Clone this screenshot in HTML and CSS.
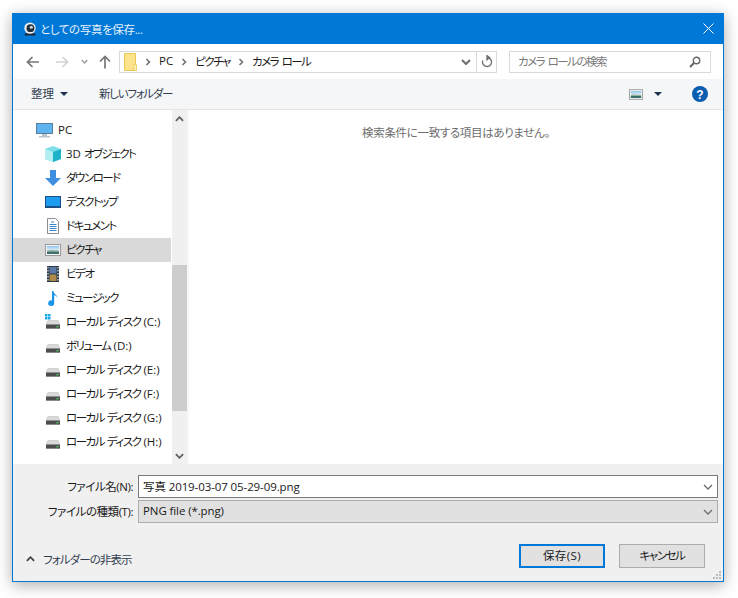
FILE: index.html
```html
<!DOCTYPE html>
<html lang="ja">
<head>
<meta charset="utf-8">
<title>としての写真を保存...</title>
<link rel="stylesheet" href="styles.css">
</head>
<body>
<svg class="defs" width="0" height="0" aria-hidden="true">
  <defs>
    <linearGradient id="sky" x1="0" y1="0" x2="0" y2="1">
      <stop offset="0" stop-color="#8fc4ea"/>
      <stop offset="1" stop-color="#e6f2f8"/>
    </linearGradient>
  </defs>
  <symbol id="drive" viewBox="0 0 16 16">
    <path d="M3 6.500h10l2 4.500H1z" fill="#d9d9d9" stroke="#bdbdbd" stroke-width=".6"/>
    <rect x="1" y="10.500" width="14" height="4.500" rx=".8" fill="#4c4c4c"/>
    <rect x="1" y="14" width="14" height="1" fill="#8a8a8a"/>
    <rect x="11.500" y="12" width="2" height="1.400" fill="#3fdc5a"/>
  </symbol>
  <symbol id="picture" viewBox="0 0 16 12">
    <rect x=".5" y=".5" width="15" height="11" fill="#f4f4f4" stroke="#9b9b9b"/>
    <rect x="2" y="2" width="12" height="4.500" fill="url(#sky)"/>
    <path d="M2 6.500c3-1 6-.5 12 0v1H2z" fill="#8fae9c"/>
    <rect x="2" y="7.500" width="12" height="2.500" fill="#3f6f6c"/>
  </symbol>
  <symbol id="chev" viewBox="0 0 10 6">
    <path d="M1 1l4 4 4-4" fill="none" stroke="currentColor" stroke-width="1.300"/>
  </symbol>
  <symbol id="chev-bold" viewBox="0 0 10 6">
    <path d="M1 1l4 4 4-4" fill="none" stroke="currentColor" stroke-width="2"/>
  </symbol>
  <symbol id="sep" viewBox="0 0 6 8">
    <path d="M1.500 1l3 3-3 3" fill="none" stroke="#6d6d6d" stroke-width="1.500"/>
  </symbol>
  <symbol id="caret" viewBox="0 0 8 4">
    <path d="M0 0h8L4 4z" fill="#1e3250"/>
  </symbol>
</svg>

<main class="window">
  <header class="titlebar">
    <svg class="app-icon" width="14" height="14" viewBox="0 0 16 16">
      <path d="M2 15.500h12v-2l-2-1H4l-2 1z" fill="#1b2a3a"/>
      <circle cx="8" cy="7" r="6.500" fill="#e9eef2"/>
      <circle cx="8.500" cy="7" r="4.500" fill="#22303c"/>
      <circle cx="9.500" cy="6" r="1.800" fill="#c9d6e0"/>
    </svg>
    <span class="title">としての写真を保存...</span>
    <svg class="close" width="11" height="11" viewBox="0 0 11 11">
      <path d="M.5.5l10 10M10.500.5l-10 10" stroke="#fff" stroke-width="1" fill="none"/>
    </svg>
  </header>

  <nav class="navbar">
    <svg class="nav-btn" width="14" height="12" viewBox="0 0 14 12"><path d="M13 6H2M6.500 1L1.500 6l5 5" fill="none" stroke="#757575" stroke-width="1.700"/></svg>
    <svg class="nav-btn nav-fwd" width="14" height="12" viewBox="0 0 14 12"><path d="M1 6h11M7.500 1l5 5-5 5" fill="none" stroke="#d3d3d3" stroke-width="1.700"/></svg>
    <svg class="nav-down" width="7" height="5"><use href="#chev-bold"/></svg>
    <svg class="nav-btn nav-up" width="12" height="14" viewBox="0 0 12 14"><path d="M6 13.500V2M1 6.500l5-5 5 5" fill="none" stroke="#757575" stroke-width="1.700"/></svg>
    <div class="address">
      <svg class="folder" width="13" height="18" viewBox="0 0 13 18">
        <path d="M.5.500h11v17H.5z" fill="#fde48c" stroke="#eac652"/>
        <path d="M10 11.500h2.500v6H10z" fill="#fff3c4" stroke="#eac652" stroke-width=".8"/>
      </svg>
      <svg class="crumb-sep" width="6" height="8"><use href="#sep"/></svg>
      <span class="crumb crumb-latin">PC</span>
      <svg class="crumb-sep" width="6" height="8"><use href="#sep"/></svg>
      <span class="crumb">ピクチャ</span>
      <svg class="crumb-sep" width="6" height="8"><use href="#sep"/></svg>
      <span class="crumb">カメラ ロール</span>
      <svg class="addr-chev" width="10" height="6"><use href="#chev-bold"/></svg>
      <span class="refresh">
        <svg width="12" height="13" viewBox="0 0 12 13"><path d="M6 2.500a4.500 4.500 0 1 1-4.200 3M6 .5v4.200L8.500 2.500z" fill="none" stroke="#6f6f6f" stroke-width="1.300"/></svg>
      </span>
    </div>
    <div class="search">
      <span>カメラ ロールの検索</span>
      <svg width="12" height="12" viewBox="0 0 12 12"><circle cx="7.500" cy="4.500" r="3.200" fill="none" stroke="#666" stroke-width="1.400"/><path d="M5 7L1 11" stroke="#666" stroke-width="2"/></svg>
    </div>
  </nav>

  <div class="toolbar">
    <span class="tool">整理</span>
    <svg class="tool-caret" width="8" height="4"><use href="#caret"/></svg>
    <span class="tool tool-new">新しいフォルダー</span>
    <svg class="view-icon" width="14" height="11"><use href="#picture"/></svg>
    <svg class="view-caret" width="8" height="4"><use href="#caret"/></svg>
    <svg class="help" width="16" height="16" viewBox="0 0 16 16"><circle cx="8" cy="8" r="8" fill="#0a5eb0"/><text x="8" y="12.500" class="help-q">?</text></svg>
  </div>

  <section class="content">
    <aside class="tree">
      <ul class="tree-list">
        <li class="row row-root">
          <svg width="17" height="15" viewBox="0 0 17 15"><rect x=".5" y=".5" width="16" height="10" fill="#5eb4ee" stroke="#5a7f9c"/><path d="M6 11h5v2H6zM3 13h11v1.500H3z" fill="#b8c4cf"/></svg>
          <span>PC</span>
        </li>
        <li class="row">
          <svg width="16" height="16" viewBox="0 0 16 16"><path d="M8 0l8 3v10l-8 3-8-3V3z" fill="#7ddde8"/><path d="M8 6l8-3v10l-8 3z" fill="#1fb3c9"/><path d="M0 3l8 3v10l-8-3z" fill="#b5eef2"/></svg>
          <span><b class="latin">3D</b> オブジェクト</span>
        </li>
        <li class="row">
          <svg width="16" height="16" viewBox="0 0 16 16"><path d="M5 0h6v8h5l-8 8-8-8h5z" fill="#3e8fe0"/></svg>
          <span>ダウンロード</span>
        </li>
        <li class="row">
          <svg width="16" height="12" viewBox="0 0 16 12"><rect width="16" height="12" fill="#1c4f84"/><rect x="1" y="1" width="14" height="9" fill="#1e9cf0"/></svg>
          <span>デスクトップ</span>
        </li>
        <li class="row">
          <svg width="16" height="16" viewBox="0 0 16 16"><path d="M2.500.5h8l3 3v12h-11z" fill="#fff" stroke="#8d8d8d"/><path d="M6 4h3M4.500 6.500h7M4.500 8.500h7M4.500 10.500h7M4.500 12.500h7" stroke="#3c87c9"/></svg>
          <span>ドキュメント</span>
        </li>
        <li class="row row-selected">
          <svg width="16" height="12"><use href="#picture"/></svg>
          <span>ピクチャ</span>
        </li>
        <li class="row">
          <svg width="16" height="16" viewBox="0 0 16 16"><rect x="2" width="12" height="16" fill="#2c3a48"/><rect x="4.500" y="1" width="7" height="6.500" fill="#5a78a8"/><rect x="4.500" y="8.500" width="7" height="6.500" fill="#b08a4a"/><path d="M3 1v14M13 1v14" stroke="#ddd" stroke-width="1.200" stroke-dasharray="1.500 1.500"/></svg>
          <span>ビデオ</span>
        </li>
        <li class="row">
          <svg width="16" height="16" viewBox="0 0 16 16"><path d="M7 1h1.500c0 3 4 3.500 4 7.500 0-2-2-3-3.300-3.500V13a3 2.800 0 1 1-2.200-2.600z" fill="#1a95ea"/></svg>
          <span>ミュージック</span>
        </li>
        <li class="row row-system">
          <svg width="16" height="16" viewBox="0 0 16 16"><use href="#drive"/><path d="M0 0h2.500v2.500H0zM3 0h2.500v2.500H3zM0 3h2.500v2.500H0zM3 3h2.500v2.500H3z" fill="#18a8e8"/></svg>
          <span>ローカル ディスク <b class="latin">(C:)</b></span>
        </li>
        <li class="row"><svg width="16" height="16"><use href="#drive"/></svg><span>ボリューム <b class="latin">(D:)</b></span></li>
        <li class="row"><svg width="16" height="16"><use href="#drive"/></svg><span>ローカル ディスク <b class="latin">(E:)</b></span></li>
        <li class="row"><svg width="16" height="16"><use href="#drive"/></svg><span>ローカル ディスク <b class="latin">(F:)</b></span></li>
        <li class="row"><svg width="16" height="16"><use href="#drive"/></svg><span>ローカル ディスク <b class="latin">(G:)</b></span></li>
        <li class="row"><svg width="16" height="16"><use href="#drive"/></svg><span>ローカル ディスク <b class="latin">(H:)</b></span></li>
      </ul>
      <div class="scrollbar">
        <svg class="sb-arrow sb-up" width="9" height="6"><use href="#chev-bold"/></svg>
        <div class="sb-track"><div class="sb-thumb"></div></div>
        <svg class="sb-arrow" width="9" height="6"><use href="#chev-bold"/></svg>
      </div>
    </aside>
    <div class="results">
      <p class="empty">検索条件に一致する項目はありません。</p>
    </div>
  </section>

  <footer class="footer">
    <form class="fields">
      <label class="field-label">ファイル名(N):</label>
      <div class="combo combo-edit">
        <span>写真 2019-03-07 05-29-09.png</span>
        <svg width="10" height="6"><use href="#chev"/></svg>
      </div>
      <label class="field-label">ファイルの種類(T):</label>
      <div class="combo combo-select">
        <span>PNG file (*.png)</span>
        <svg width="10" height="6"><use href="#chev"/></svg>
      </div>
    </form>
    <div class="actions">
      <div class="toggle">
        <svg class="toggle-chev" width="9" height="6"><use href="#chev-bold"/></svg>
        <span>フォルダーの非表示</span>
      </div>
      <button type="button" class="btn btn-default">保存(S)</button>
      <button type="button" class="btn btn-cancel">キャンセル</button>
    </div>
    <svg class="grip" width="9" height="9" viewBox="0 0 9 9"><path d="M6 0h2v2H6zM3 3h2v2H3zM6 3h2v2H6zM0 6h2v2H0zM3 6h2v2H3zM6 6h2v2H6z" fill="#bdbdbd"/></svg>
  </footer>
</main>
</body>
</html>
```
FILE: styles.css
```css
* { box-sizing: border-box; }
html, body { margin: 0; height: 100%; background: #fff; }
body {
  padding: 13px 0 0 12px;
  font-family: "Open Sans", "Noto Sans CJK JP", sans-serif;
  font-size: 11.5px;
  font-feature-settings: "palt";
  color: #1a1a1a;
  overflow: hidden;
}
.defs { position: absolute; }
svg { display: block; flex: none; }

.window {
  width: 712px;
  height: 569px;
  border: 1px solid #0078d7;
  display: flex;
  flex-direction: column;
  background: #f0f0f0;
  box-shadow: 0 3px 14px rgba(0, 0, 0, .33);
}

.titlebar {
  height: 30px;
  background: #0078d7;
  display: flex;
  align-items: center;
  padding: 0 8px 0 10px;
  color: #fff;
}
.title { margin-left: 3px; flex: 1; color: #e6f1fb; letter-spacing: -.35px; }
.close { margin-right: 1px; margin-top: -1px; }

.navbar {
  height: 35px;
  background: #fff;
  display: flex;
  align-items: center;
  padding: 0 12px 0 13px;
  color: #6d6d6d;
}
.nav-fwd { margin-left: 15px; }
.nav-down { margin-left: 12px; color: #9b9b9b; }
.nav-up { margin-left: 11px; }
.address {
  width: 378px;
  height: 22px;
  margin-left: 8px;
  border: 1px solid #d9d9d9;
  display: flex;
  align-items: center;
  padding-left: 4px;
  color: #1a1a1a;
}
.crumb-sep { margin: 0 8px; }
.crumb {
  white-space: nowrap;
  letter-spacing: -1.5px;
  word-spacing: 2px;
  padding-bottom: 2px;
}
.crumb-latin { letter-spacing: 0; }
.addr-chev { margin-left: auto; margin-right: 5px; color: #6d6d6d; }
.refresh {
  width: 20px;
  height: 100%;
  border-left: 1px solid #d9d9d9;
  display: flex;
  align-items: center;
  justify-content: center;
}
.search {
  width: 202px;
  height: 22px;
  margin-left: 12px;
  border: 1px solid #d9d9d9;
  display: flex;
  align-items: center;
  justify-content: space-between;
  padding: 0 9px 0 8px;
  color: #7a7a7a;
}
.search span { letter-spacing: -1.5px; word-spacing: 2px; padding-bottom: 2px; }

.toolbar {
  height: 31px;
  background: #f5f6f7;
  border-bottom: 1px solid #e5e5e5;
  display: flex;
  align-items: center;
  padding: 0 15px 0 18px;
  color: #333f50;
}
.tool { padding-bottom: 2px; }
.tool-caret { margin-left: 6px; }
.tool-new { margin-left: 31px; letter-spacing: -1.25px; }
.view-icon { margin-left: auto; }
.view-caret { margin-left: 11px; }
.help { margin-left: 30px; }
.help-q { font: bold 12px "Liberation Sans", sans-serif; fill: #fff; text-anchor: middle; }

.content {
  height: 354px;
  background: #fff;
  display: flex;
}
.tree {
  width: 174px;
  display: flex;
  justify-content: space-between;
}
.tree-list {
  list-style: none;
  margin: 0;
  padding: 8px 0 0;
  width: 158px;
  flex: none;
}
.row {
  height: 24px;
  display: flex;
  align-items: center;
  gap: 5px;
  padding-left: 32px;
  white-space: nowrap;
  letter-spacing: -1.5px;
  word-spacing: 1.500px;
}
.row span { padding-bottom: 2px; }
.latin { font-weight: normal; letter-spacing: 0; }
.row-root { padding-left: 23px; letter-spacing: 0; }
.row-selected { background: #d9d9d9; }
.scrollbar {
  width: 15px;
  background: #f0f0f0;
  display: flex;
  flex-direction: column;
  align-items: center;
  color: #606060;
}
.sb-arrow { margin: 6px 0 5px; }
.sb-up { transform: scaleY(-1); }
.sb-track {
  flex: 1;
  width: 100%;
  padding-top: 138px;
}
.sb-thumb { height: 146px; background: #cdcdcd; }
.results {
  flex: 1;
  border-left: 2px solid #f7f7f7;
}
.empty {
  margin: 14px 0 0;
  text-align: center;
  color: #6d6d6d;
  letter-spacing: -.33px;
}

.footer {
  flex: 1;
  position: relative;
  background: #f0f0f0;
  padding: 11px 5px 0 0;
  display: flex;
  flex-direction: column;
}
.fields {
  display: grid;
  grid-template-columns: 120px 580px;
  column-gap: 5px;
  row-gap: 2px;
  align-items: center;
}
.field-label {
  text-align: right;
  white-space: nowrap;
  color: #1a1a1a;
  letter-spacing: -.45px;
  padding-bottom: 2px;
}
.combo {
  height: 23px;
  display: flex;
  align-items: center;
  justify-content: space-between;
  padding: 0 4px;
  color: #6d6d6d;
}
.combo span { color: #1a1a1a; letter-spacing: -.1px; padding-bottom: 2px; }
.combo-edit { background: #fff; border: 1px solid #7a7a7a; }
.combo-select { background: #e1e1e1; border: 1px solid #adadad; }

.actions {
  display: flex;
  align-items: center;
  margin-top: 21px;
  padding-left: 13px;
}
.toggle {
  display: flex;
  align-items: center;
  gap: 8px;
  margin-right: auto;
  margin-top: 6px;
  color: #333f50;
  letter-spacing: -.9px;
}
.toggle-chev { transform: scaleY(-1); color: #444; }
.btn {
  width: 86px;
  height: 24px;
  padding: 0 0 2px;
  background: #e1e1e1;
  border: 1px solid #adadad;
  font: inherit;
  color: #1a1a1a;
  margin-left: 14px;
}
.btn-cancel { margin-right: 13px; letter-spacing: -1.4px; }
.btn-default { border: 2px solid #0078d7; letter-spacing: .4px; }
.grip { position: absolute; right: 1px; bottom: 1px; }
```
